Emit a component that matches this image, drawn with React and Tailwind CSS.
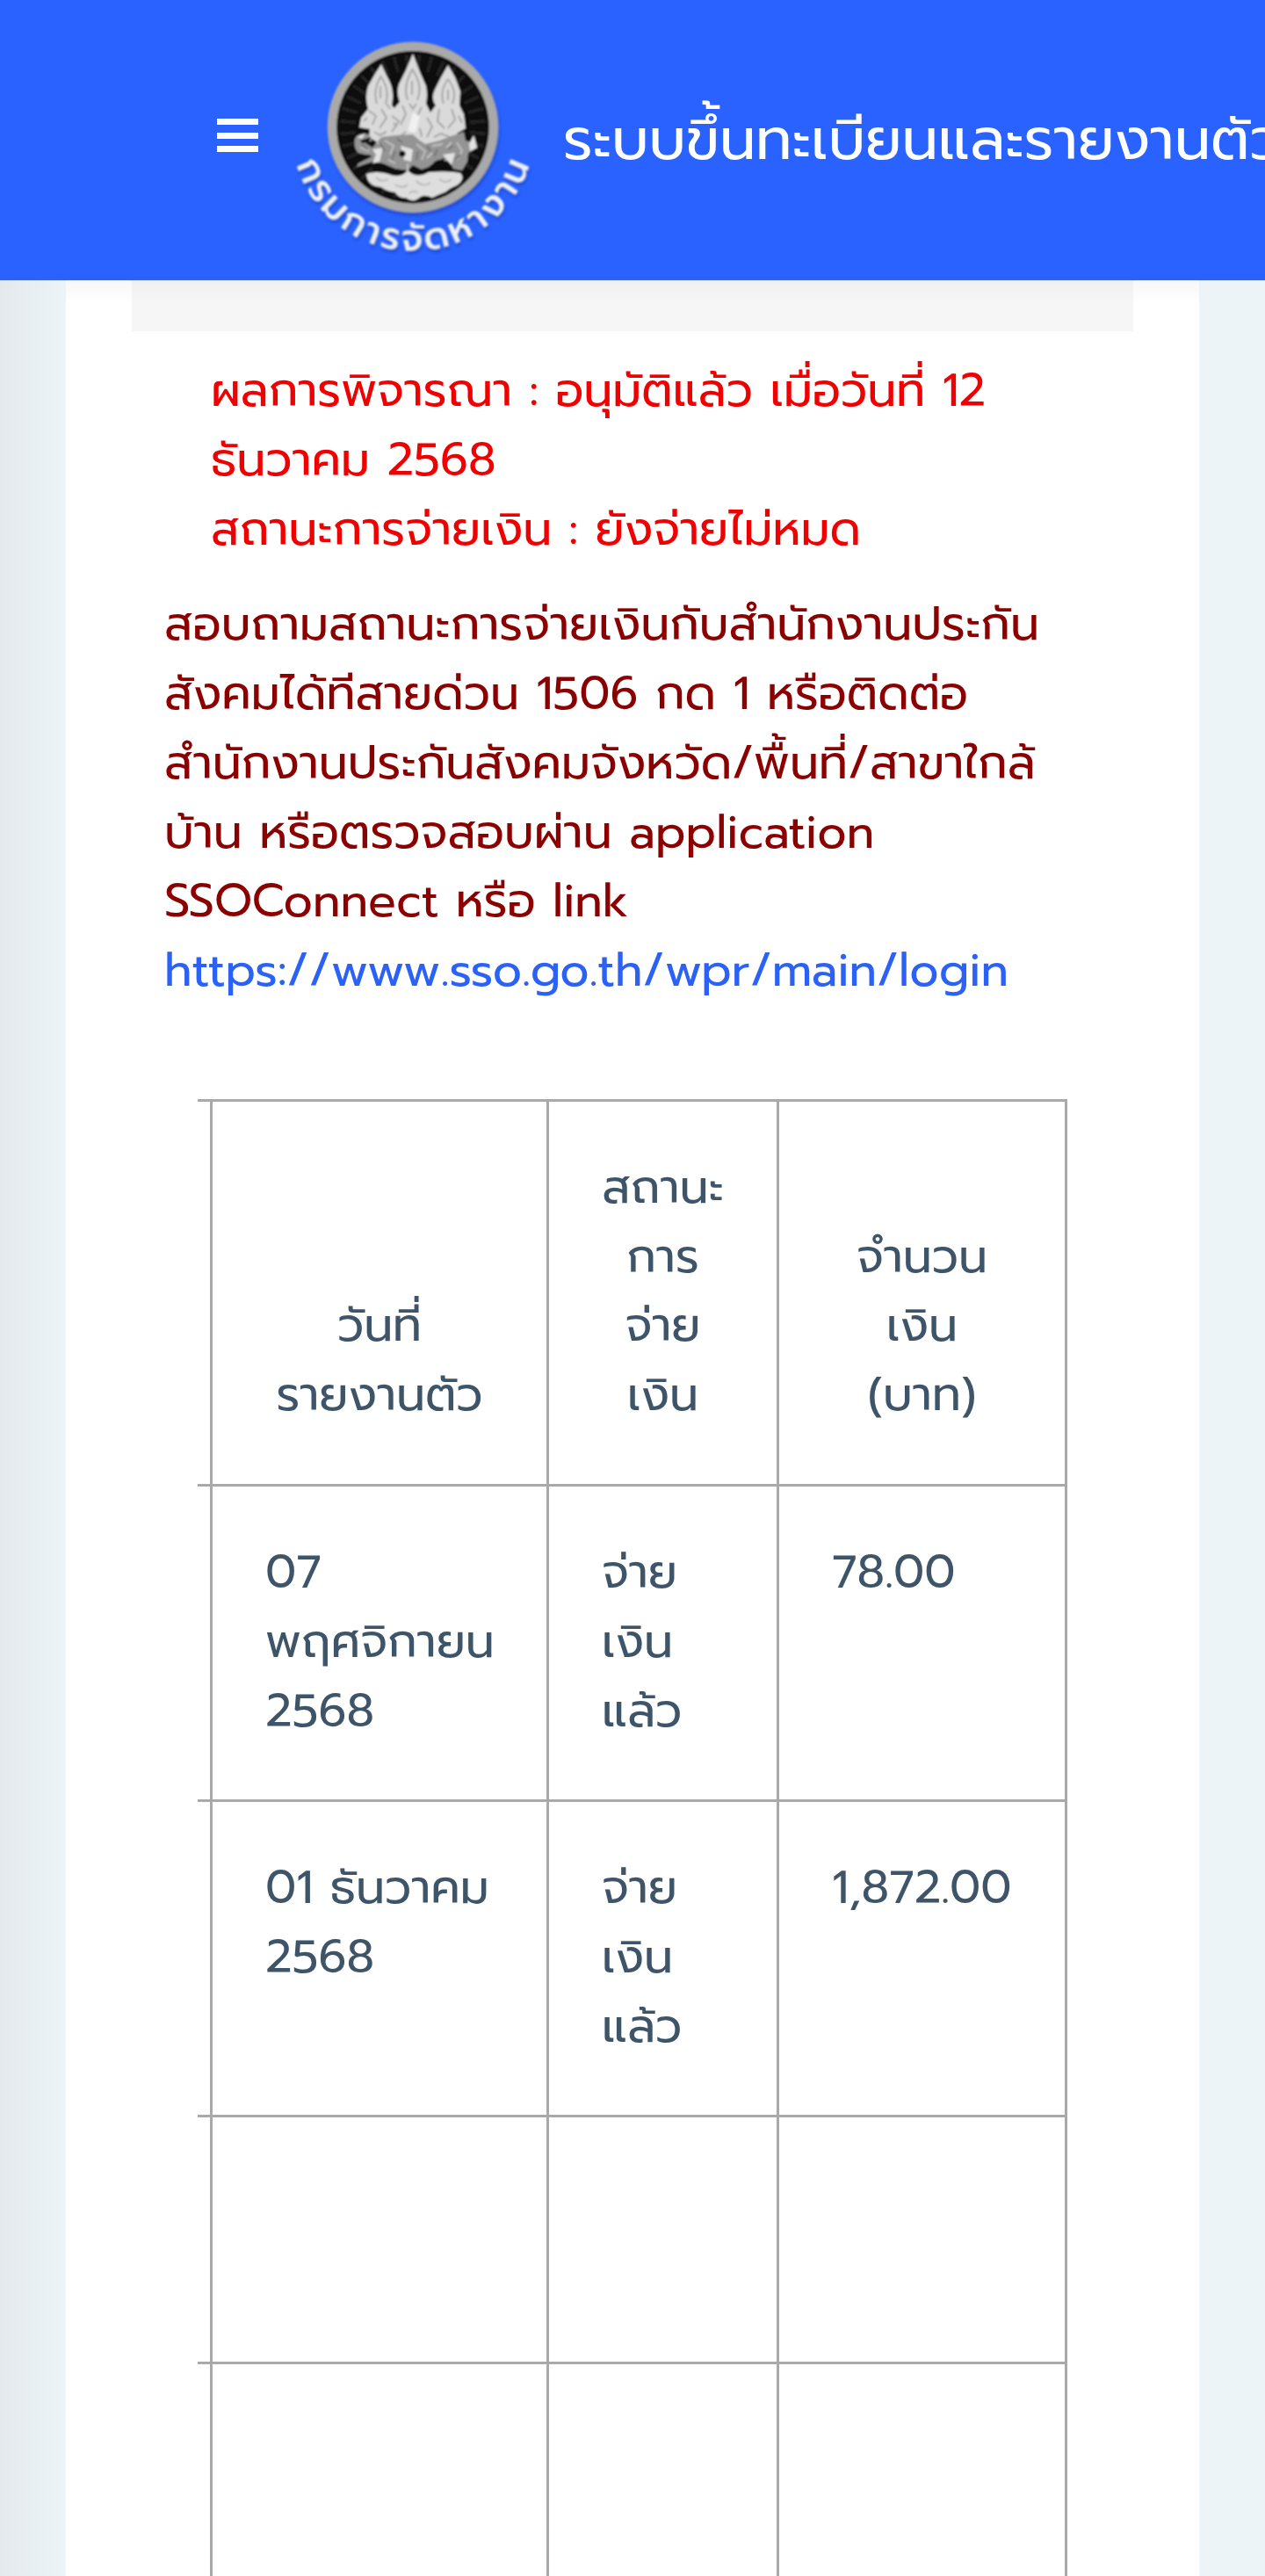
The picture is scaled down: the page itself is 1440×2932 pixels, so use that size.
import React from 'react';

const rows = [
    { date: '07 พฤศจิกายน 2568', status: ['จ่าย', 'เงิน', 'แล้ว'], amount: '78.00' },
    { date: '01 ธันวาคม 2568', status: ['จ่าย', 'เงิน', 'แล้ว'], amount: '1,872.00' },
];

const Lines = ({ items }) => items.map((item) => <span key={item} className="block whitespace-nowrap">{item}</span>);

const rays = Array.from({ length: 36 }, (_, i) => i * 10);

const Emblem = () => (
    <svg viewBox="335 40 270 255" className="w-[270px] h-[255px] shrink-0 overflow-visible" role="img" aria-label="กรมการจัดหางาน">
        <defs>
            <path id="ring" d="M 336.6 184 A 138.5 138.5 0 0 0 603.4 184" />
            <filter id="soft" x="-5%" y="-5%" width="110%" height="110%">
                <feGaussianBlur stdDeviation="0.9" />
            </filter>
            <filter id="drop" x="-10%" y="-10%" width="120%" height="120%">
                <feDropShadow dx="1" dy="3" stdDeviation="1.5" floodColor="#12309a" floodOpacity="0.6" />
            </filter>
        </defs>
        <g filter="url(#soft)">
            <circle cx="470" cy="144.7" r="92" fill="#0a0a0a" stroke="#a9a9a9" strokeWidth="10.5" filter="url(#drop)" />
            <g stroke="#222" strokeWidth="4">
                {rays.map((deg) => (
                    <line key={deg} x1="470" y1="80" x2="470" y2="62" transform={`rotate(${deg + 5} 470 145)`} />
                ))}
            </g>

            {/* three crowns */}
            <path d="M434 73 L440 86 Q448 99 447 112 L446 120 L449 123 L455 116 Q451 106 454 96 L462 80 L470 61 L478 82 L485 98 Q487 108 485 118 L490 128 L496 120 Q490 112 495 102 L502 88 L510 74 L518 88 L524 104 L523 120 L528 130 L530 146 L520 152 L528 164 L496 172 L440 168 L420 156 L421 147 L409 145 L411 134 L419 124 Q415 110 419 98 L427 84 Z" fill="#dadada" />
            <g fill="none" stroke="#a4a4a4" strokeWidth="2">
                <path d="M434 86 Q424 102 429 118 M434 88 Q444 102 439 118 M470 78 Q458 98 464 114 M470 80 Q482 98 475 114 M510 90 Q500 104 505 118 M510 90 Q521 104 515 118" />
                <path d="M433 98 V112 M469 92 V108 M510 102 V114" />
                <path d="M420 126 L428 132 L424 142 M434 124 L440 134 L432 146 M446 132 L454 138 L446 150 M458 120 L462 130 L456 142 M480 122 L474 134 M486 134 L492 144 L486 156 M500 124 L498 138 L506 146 M514 124 L518 136 L510 146 M462 150 L452 158" />
                <path d="M414 138 L418 134 M426 150 L432 154 L440 150 M452 144 L448 140 M494 156 L502 152 L512 156 M522 132 L526 140 M478 146 L480 156 M466 118 L470 124 L474 118 M440 118 L444 124" />
            </g>
            <path d="M470 128 L464 149 L473 151 L478 132 Z" fill="#f0f0f0" />

            {/* deities on the pedestal */}
            <path d="M404 158 Q408 150 420 153 L424 160 L416 163 L424 168 L434 156 L450 154 L470 153 L478 160 L484 164 L500 160 L516 154 L528 150 L530 160 L537 162 L540 154 L543 168 L533 174 L532 184 L526 194 L516 192 L512 184 L498 182 L488 190 L480 193 L470 188 L464 194 L450 192 L436 186 L424 184 L406 190 L408 186 L424 178 L408 174 Q402 168 404 158 Z" fill="#949494" />
            <path d="M424 170 L436 168 L432 184 L424 186 L428 176 Z M456 166 L470 170 L468 184 L460 182 Z M504 176 L518 174 L514 188 Z M534 164 L539 154 L543 168 L535 172 Z M406 156 L416 152 L412 158 Z" fill="#e2e2e2" />
            <g fill="#111">
                <circle cx="458" cy="175" r="3.6" />
                <path d="M410 160 L422 156 L420 162 L412 163 Z M410 176 L422 176 L416 180 Z M426 186 L444 190 L442 196 L424 192 Z M494 184 L506 180 L504 190 L494 190 Z M446 194 L458 194 L452 202 Z" />
            </g>
            <g fill="none" stroke="#c4c4c4" strokeWidth="1.8">
                <path d="M438 160 L448 166 L444 176 M474 164 L484 172 L480 182 M492 166 L504 164 M520 162 L526 172 L520 182 M410 168 L420 172 M464 186 V198 M442 182 L450 186 M486 180 L492 174 M508 168 L514 162 M428 162 L434 164" />
            </g>
            <g fill="none" stroke="#6f6f6f" strokeWidth="1.8">
                <path d="M432 162 L438 172 M452 158 L458 162 M450 172 L446 182 M476 172 L474 182 M490 172 L486 166 M498 170 L494 178 M516 166 L510 170 M524 176 L518 182 M412 164 L418 170" />
            </g>

            {/* cloud base */}
            <path d="M417 198 Q428 194 442 198 Q456 204 464 194 Q474 204 488 196 Q508 194 524 197 Q530 204 520 211 Q512 214 508 218 Q498 222 492 225 Q482 220 476 226 Q469 231 462 225 Q454 226 450 219 Q440 218 434 213 Q418 212 417 198 Z" fill="#dedede" />
            <path d="M428 202 Q434 208 442 204 M450 210 Q458 216 464 210 M474 206 Q482 214 490 208 M500 204 Q508 210 514 204 M466 220 Q470 216 476 219" fill="none" stroke="#b8b8b8" strokeWidth="1.8" />

            <text
                fill="#eceffa"
                filter="url(#drop)"
                className="font-[Prompt,'Noto_Sans',sans-serif] font-medium text-[42px]"
            >
                <textPath href="#ring" startOffset="2" textLength="354" lengthAdjust="spacing">กรมการจัดหางาน</textPath>
            </text>
        </g>
    </svg>
);

const Header = () => (
    <header className="relative z-10 flex h-[319px] items-start overflow-hidden border-b border-[#3f62d0] bg-[#2962ff] text-white">
        <button type="button" aria-label="menu" className="mt-[135px] ml-[247px] flex w-[47px] shrink-0 flex-col gap-[8.5px]">
            <span className="block h-[7px] w-full bg-white" />
            <span className="block h-[7px] w-full bg-white" />
            <span className="block h-[7px] w-full bg-white" />
        </button>
        <div className="mt-10 ml-[41px] shrink-0">
            <Emblem />
        </div>
        <span className="mt-[109px] ml-9 whitespace-nowrap text-[65.7px] leading-[101px]">
            ระบบขึ้นทะเบียนและรายงานตัว
        </span>
    </header>
);

const PaymentTable = () => (
    <table className="w-[990px] table-fixed border-separate border-spacing-0 border-t-3 border-[#a9a9a9]">
        <colgroup>
            <col className="w-[17px]" />
            <col className="w-[383px]" />
            <col className="w-[262px]" />
            <col className="w-[328px]" />
        </colgroup>
        <thead>
            <tr className="h-[438px] align-bottom *:border-r-3 *:border-b-3 *:border-[#a9a9a9] *:font-normal">
                <th />
                <th className="px-4 pb-[61px]"><Lines items={['วันที่', 'รายงานตัว']} /></th>
                <th className="px-4 pb-[61px]"><Lines items={['สถานะ', 'การ', 'จ่าย', 'เงิน']} /></th>
                <th className="px-4 pb-[61px]"><Lines items={['จำนวน', 'เงิน', '(บาท)']} /></th>
            </tr>
        </thead>
        <tbody className="*:*:border-r-3 *:*:border-b-3 *:*:border-[#a9a9a9]">
            {rows.map((row) => (
                <tr key={row.date} className="h-[359px] align-top">
                    <td />
                    <td className="pt-[59.5px] pr-[50px] pl-[60px]">{row.date}</td>
                    <td className="pt-[59.5px] pl-[60px]"><Lines items={row.status} /></td>
                    <td className="pt-[59.5px] pl-[60px]">{row.amount}</td>
                </tr>
            ))}
            {[1, 2].map((n) => (
                <tr key={n} className="h-[281px]">
                    <td />
                    <td />
                    <td />
                    <td />
                </tr>
            ))}
        </tbody>
    </table>
);

export default function App() {
    return (
        <div className="h-[2932px] w-[1440px] overflow-hidden bg-[#ecf4f8] font-[Prompt,'Noto_Sans',sans-serif] text-[52.5px] leading-[78.75px] font-normal text-[#3e5569]">
            <Header />
            <div className="h-full bg-linear-to-r from-[#e4e9ed] to-[#ecf4f8] to-[75px] px-[75px]">
                <main className="h-full bg-linear-to-b from-[#f7f7f7] to-white to-[26px] px-[75px]">
                    <div className="h-[58px] bg-linear-to-b from-[#f0f0f1] to-[#f6f6f6] to-[26px]" />

                    <div className="mt-[29px] pl-[90px] whitespace-nowrap text-[#f00000]">
                        <p>ผลการพิจารณา : อนุมัติแล้ว เมื่อวันที่ 12<br />ธันวาคม 2568</p>
                        <p>สถานะการจ่ายเงิน : ยังจ่ายไม่หมด</p>
                    </div>

                    <p className="mt-[30px] pl-[37px] whitespace-nowrap text-[#8b0000]">
                        สอบถามสถานะการจ่ายเงินกับสำนักงานประกัน<br />
                        สังคมได้ทีสายด่วน 1506 กด 1 หรือติดต่อ<br />
                        สำนักงานประกันสังคมจังหวัด/พื้นที่/สาขาใกล้<br />
                        บ้าน หรือตรวจสอบผ่าน application<br />
                        SSOConnect หรือ link<br />
                        <a href="#login" className="text-[#2b62f5]">https://www.sso.go.th/wpr/main/login</a>
                    </p>

                    <div className="mt-[106px] ml-[75px]">
                        <PaymentTable />
                    </div>
                </main>
            </div>
        </div>
    );
}
